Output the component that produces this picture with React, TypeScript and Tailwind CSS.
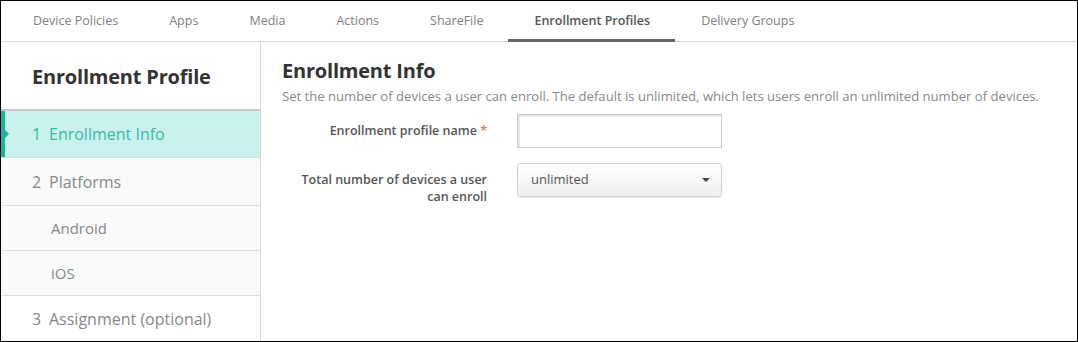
const tabs = ['Device Policies', 'Apps', 'Media', 'Actions', 'ShareFile', 'Enrollment Profiles', 'Delivery Groups'];

export default function App() {
  return (
    <div
      className="w-[1078px] h-[342px] border border-black bg-white overflow-hidden flex flex-col text-[#333]"
      style={{ fontFamily: '"Open Sans", "Liberation Sans", sans-serif' }}
    >
      {/* top tabs */}
      <div className="h-[41px] shrink-0 flex items-stretch border-b border-[#d9d9d9] pl-[6px]">
        {tabs.map((t) => {
          const active = t === 'Enrollment Profiles';
          return (
            <div
              key={t}
              className={
                active
                  ? 'relative pl-[26px] pr-[25px] flex items-center text-[12.5px] font-semibold text-[#555]'
                  : 'relative pl-[26px] pr-[25px] flex items-center text-[12.5px] text-[#808080]'
              }
            >
              {t}
              {active && <div className="absolute left-0 right-0 bottom-[-1px] h-[3px] bg-[#666]" />}
            </div>
          );
        })}
      </div>

      <div className="flex flex-1 min-h-0">
        {/* sidebar */}
        <div className="w-[260px] shrink-0 border-r border-[#d6d6d6] flex flex-col">
          <div className="h-[69px] shrink-0 flex items-center pl-[31px] pt-[3px] border-b-2 border-[#c8c8c8]">
            <h1 className="text-[20px] font-bold text-[#333] tracking-[-0.2px]">Enrollment Profile</h1>
          </div>
          <div className="relative h-[47px] shrink-0 flex items-center pl-[31px] bg-[#caf2ed] border-b border-[#dcdcdc] text-[16px] text-[#3bb8a8]">
            <div className="absolute left-0 top-0 bottom-0 w-[4px] bg-[#19b3a1]" />
            <div className="absolute left-[4px] top-[19px] w-0 h-0 border-y-[4px] border-y-transparent border-l-[4px] border-l-[#19b3a1]" />
            <span className="w-[17px]">1</span>
            <span>Enrollment Info</span>
          </div>
          <div className="h-[48px] shrink-0 flex items-center pl-[31px] bg-[#f9fafa] border-b border-[#dcdcdc] text-[16px] text-[#888]">
            <span className="w-[17px]">2</span>
            <span>Platforms</span>
          </div>
          <div className="h-[45px] shrink-0 flex items-center pl-[50px] bg-[#f9fafa] border-b border-[#dcdcdc] text-[15px] text-[#888]">
            Android
          </div>
          <div className="h-[45px] shrink-0 flex items-center pl-[50px] bg-[#f9fafa] border-b border-[#dcdcdc] text-[15px] text-[#888]">
            iOS
          </div>
          <div className="h-[46px] shrink-0 flex items-center pl-[31px] text-[16px] text-[#888]">
            <span className="w-[17px]">3</span>
            <span>Assignment (optional)</span>
          </div>
        </div>

        {/* main */}
        <div className="flex-1 pl-[21px] pt-[16px]">
          <h2 className="text-[20px] font-bold leading-[26px] text-[#333] tracking-[-0.2px]">Enrollment Info</h2>
          <p className="text-[13.1px] leading-[18px] text-[#888] mt-[3px]">
            Set the number of devices a user can enroll. The default is unlimited, which lets users enroll an unlimited number of devices.
          </p>

          <div className="mt-[9px] flex items-center pl-[10px]">
            <label className="w-[195px] text-right text-[12.5px] font-semibold text-[#555]">
              Enrollment profile name <span className="text-[#e57373]">*</span>
            </label>
            <input
              className="ml-[30px] w-[205px] h-[34px] border border-[#ccc] bg-white outline-none shadow-[inset_2px_2px_0_#e6e6e6]"
            />
          </div>

          <div className="mt-[15px] flex items-start pl-[10px]">
            <label className="w-[195px] text-right text-[12.5px] leading-[17px] font-semibold text-[#555] pt-[8px]">
              Total number of devices a user can enroll
            </label>
            <button className="ml-[30px] w-[205px] h-[34px] rounded-[3px] border border-[#d0d0d0] bg-gradient-to-b from-white to-[#f0f0f0] shadow-[0_1px_1px_rgba(0,0,0,0.08)] flex items-center justify-between pl-[13px] pr-[11px] text-[13px] text-[#555]">
              <span>unlimited</span>
              <span className="w-0 h-0 border-x-[4px] border-x-transparent border-t-[4px] border-t-[#444]" />
            </button>
          </div>
        </div>
      </div>
    </div>
  );
}
